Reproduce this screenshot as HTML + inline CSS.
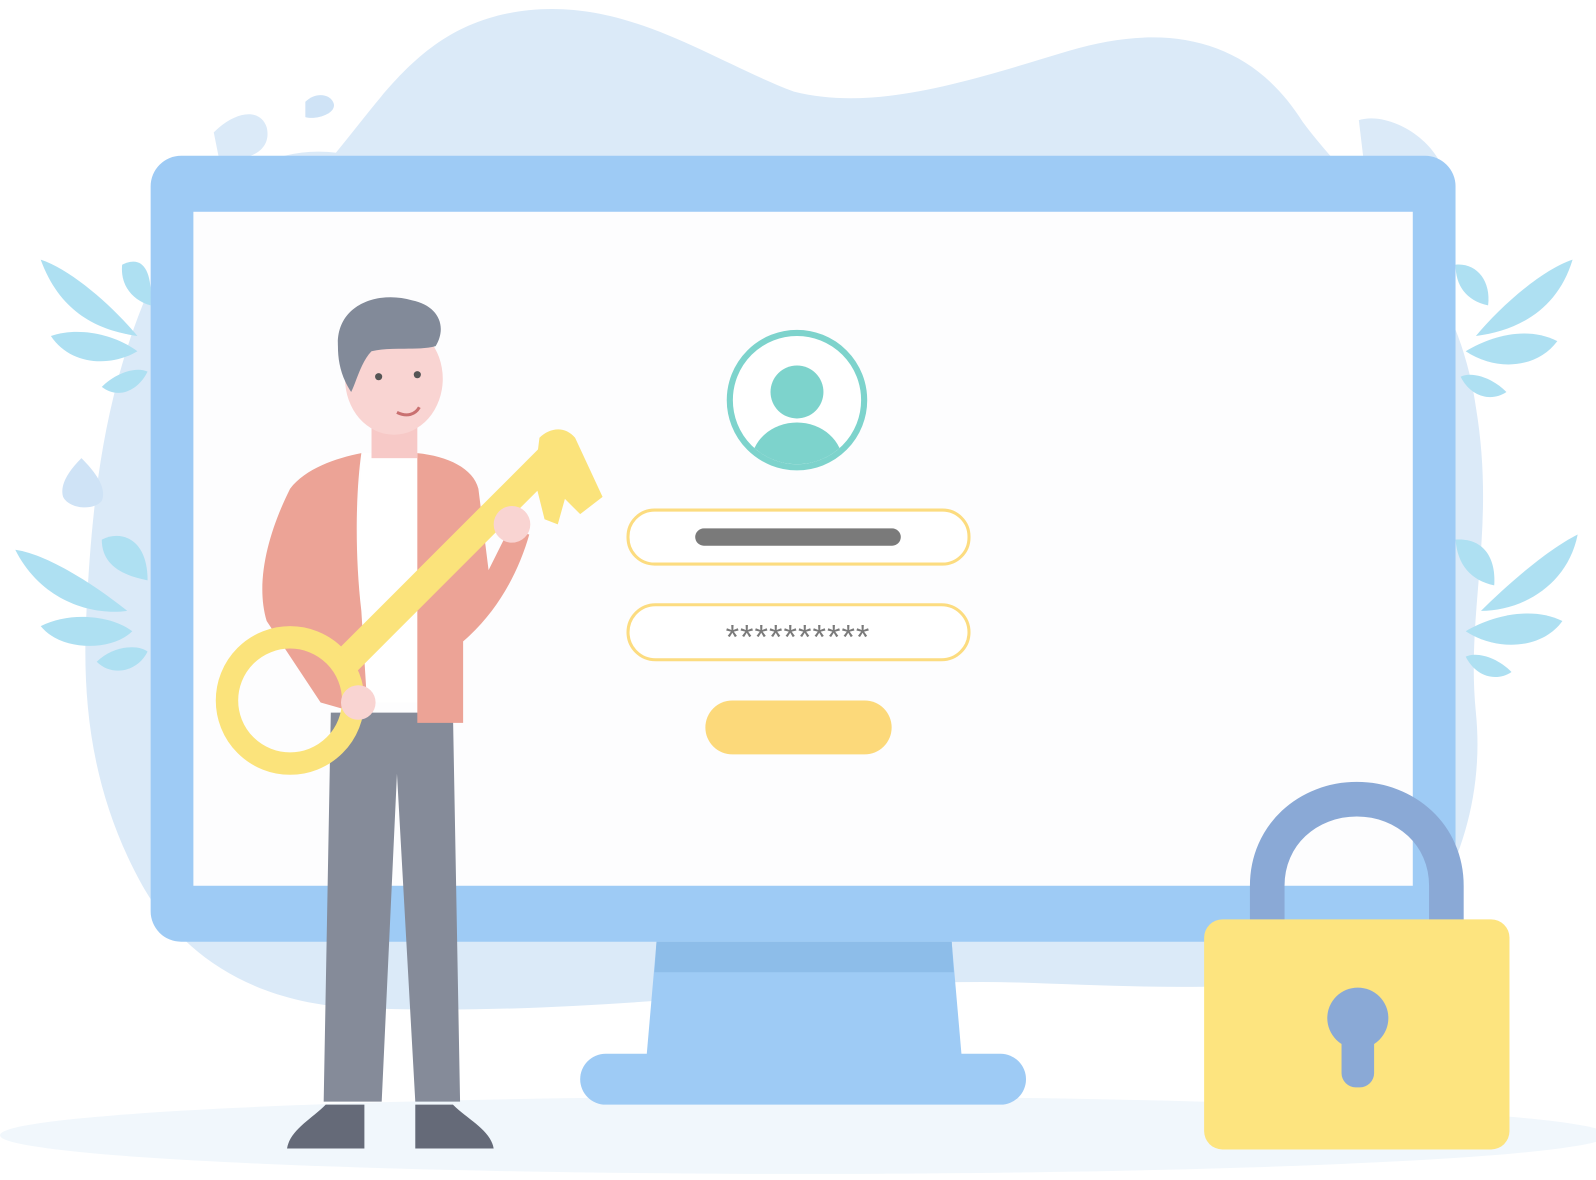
<!DOCTYPE html>
<html><head><meta charset="utf-8"><style>
html,body{margin:0;padding:0;background:#fff;width:1596px;height:1180px;overflow:hidden}
svg{display:block}
</style></head><body>
<svg width="1596" height="1180" viewBox="0 0 1568 1159" preserveAspectRatio="none" xmlns="http://www.w3.org/2000/svg">
<ellipse cx="790" cy="1115" rx="790" ry="38" fill="#f1f7fc"/>
<path d="M330 150 C380 90 420 20 520 10 C620 0 700 60 780 90 C860 110 950 80 1050 50 C1150 20 1230 40 1280 120 C1340 200 1430 260 1450 400 C1470 520 1440 600 1450 700 C1460 800 1420 880 1380 930 C1300 980 1150 970 1000 965 C800 960 600 1000 350 990 C250 985 180 940 140 870 C90 780 80 690 85 600 C90 500 100 400 140 300 C180 200 250 140 330 150 Z" fill="#dbeaf8"/>
<path d="M210 130 C230 110 255 105 262 125 C268 150 240 160 215 155 Z" fill="#dbeaf8"/>
<path d="M300 100 C310 90 325 92 328 102 C330 112 310 118 300 115 Z" fill="#cfe3f6"/>
<path d="M1335 118 C1360 110 1400 130 1415 160 L1340 160 Z" fill="#dbeaf8"/>
<path d="M80 450 C95 465 105 480 100 492 C92 502 68 500 62 488 C58 475 70 460 80 450 Z" fill="#cfe3f6"/>
<g fill="#aee0f2">
<path d="M40 255 C70 265 110 300 135 330 C100 325 60 310 40 255 Z"/>
<path d="M50 330 C80 320 115 330 135 345 C110 360 70 360 50 330 Z"/>
<path d="M100 380 C115 365 135 360 145 365 C135 385 115 392 100 380 Z"/>
<path d="M120 260 C140 250 150 265 148 300 C130 295 118 280 120 260 Z"/>
<path d="M15 540 C50 545 100 580 125 600 C90 605 40 590 15 540 Z"/>
<path d="M40 615 C70 600 110 605 130 620 C110 640 60 640 40 615 Z"/>
<path d="M95 650 C110 635 135 632 145 640 C135 660 110 665 95 650 Z"/>
<path d="M100 530 C120 520 145 530 145 570 C120 565 100 555 100 530 Z"/>
</g>
<g fill="#aee0f2">
<path d="M1545 255 C1515 265 1475 300 1450 330 C1490 325 1530 305 1545 255 Z"/>
<path d="M1530 335 C1500 320 1465 330 1440 345 C1470 365 1510 362 1530 335 Z"/>
<path d="M1480 385 C1465 370 1445 365 1435 370 C1445 390 1465 395 1480 385 Z"/>
<path d="M1430 260 C1450 258 1465 275 1462 300 C1440 295 1430 280 1430 260 Z"/>
<path d="M1550 525 C1520 540 1480 575 1455 600 C1495 600 1540 575 1550 525 Z"/>
<path d="M1535 610 C1505 595 1465 605 1440 620 C1470 640 1515 638 1535 610 Z"/>
<path d="M1485 660 C1470 645 1450 640 1440 645 C1450 665 1470 670 1485 660 Z"/>
<path d="M1430 530 C1455 528 1470 545 1468 575 C1445 570 1432 555 1430 530 Z"/>
</g>
<rect x="148" y="153" width="1282" height="772" rx="30" fill="#9ecbf5"/>
<rect x="190" y="208" width="1198" height="662" fill="#fdfdfe"/>
<path d="M645 925 L935 925 L945 1040 L635 1040 Z" fill="#9ecbf5"/>
<path d="M645 925 L935 925 L937 955 L643 955 Z" fill="#8dbde9"/>
<rect x="570" y="1035" width="438" height="50" rx="25" fill="#9ecbf5"/>
<defs><clipPath id="av"><circle cx="783" cy="393" r="63"/></clipPath></defs>
<circle cx="783" cy="393" r="66" fill="#fff" stroke="#7dd3cc" stroke-width="6"/>
<circle cx="783" cy="385" r="26" fill="#7dd3cc"/>
<ellipse cx="783" cy="455" rx="45" ry="40" fill="#7dd3cc" clip-path="url(#av)"/>
<rect x="617" y="501" width="335" height="53" rx="26" fill="#fff" stroke="#fcdc80" stroke-width="3"/>
<rect x="683" y="519" width="202" height="17" rx="8.5" fill="#7a7a7a"/>
<rect x="617" y="594" width="335" height="54" rx="27" fill="#fff" stroke="#fcdc80" stroke-width="3"/>
<text x="784" y="637" text-anchor="middle" font-family="Liberation Sans, sans-serif" font-size="34" fill="#7a7a7a" letter-spacing="1">**********</text>
<rect x="693" y="688" width="183" height="53" rx="26.5" fill="#fcd97a"/>
<g>
<path d="M325 700 L445 700 L452 1082 L408 1082 L390 760 L375 1082 L318 1082 Z" fill="#858b99"/>
<path d="M320 1085 L358 1085 L358 1128 L282 1128 C285 1110 305 1100 320 1085 Z" fill="#656a78"/>
<path d="M408 1085 L445 1085 C460 1100 482 1110 485 1128 L408 1128 Z" fill="#656a78"/>
<path d="M355 445 L420 445 L420 690 L345 690 Z" fill="#ffffff"/>
<path d="M355 445 C330 450 300 460 285 480 C265 520 250 570 262 610 L315 690 L350 700 L360 680 L355 600 C348 540 350 480 355 445 Z" fill="#eca396"/>
<path d="M410 445 C440 448 465 460 470 480 L480 560 L500 520 L520 525 C510 560 490 600 455 630 L455 710 L410 710 Z" fill="#eca396"/>
<rect x="365" y="410" width="45" height="40" fill="#f7c9c7"/>
<ellipse cx="387" cy="372" rx="48" ry="55" fill="#f9d4d2"/>
<path d="M332 340 C330 300 370 285 405 295 C430 300 440 320 428 340 C410 345 385 340 365 345 C355 355 350 375 345 385 C335 370 332 355 332 340 Z" fill="#828a99"/>
<circle cx="372" cy="370" r="3.5" fill="#555"/>
<circle cx="410" cy="368" r="3.5" fill="#555"/>
<path d="M390 405 C400 410 408 407 412 400" stroke="#c97070" stroke-width="3" fill="none"/>
<circle cx="285" cy="688" r="62" fill="none" stroke="#fbe37b" stroke-width="22"/>
<path d="M330 640 L540 430 L560 450 L350 660 Z" fill="#fbe37b"/>
<path d="M530 430 C540 420 555 418 565 430 L592 488 L570 505 L555 490 L548 515 L535 510 L525 470 Z" fill="#fbe37b"/>
<circle cx="503" cy="515" r="18" fill="#f9d4d2"/>
<circle cx="352" cy="690" r="17" fill="#f9d4d2"/>
</g>
<path d="M1245 905 L1245 870 C1245 820 1285 785 1333 785 C1381 785 1421 820 1421 870 L1421 905" fill="none" stroke="#8aa9d6" stroke-width="34"/>
<rect x="1183" y="903" width="300" height="226" rx="18" fill="#fde47f"/>
<circle cx="1334" cy="1000" r="30" fill="#8aa9d6"/>
<rect x="1318" y="1000" width="32" height="68" rx="14" fill="#8aa9d6"/>
</svg>
</body></html>
